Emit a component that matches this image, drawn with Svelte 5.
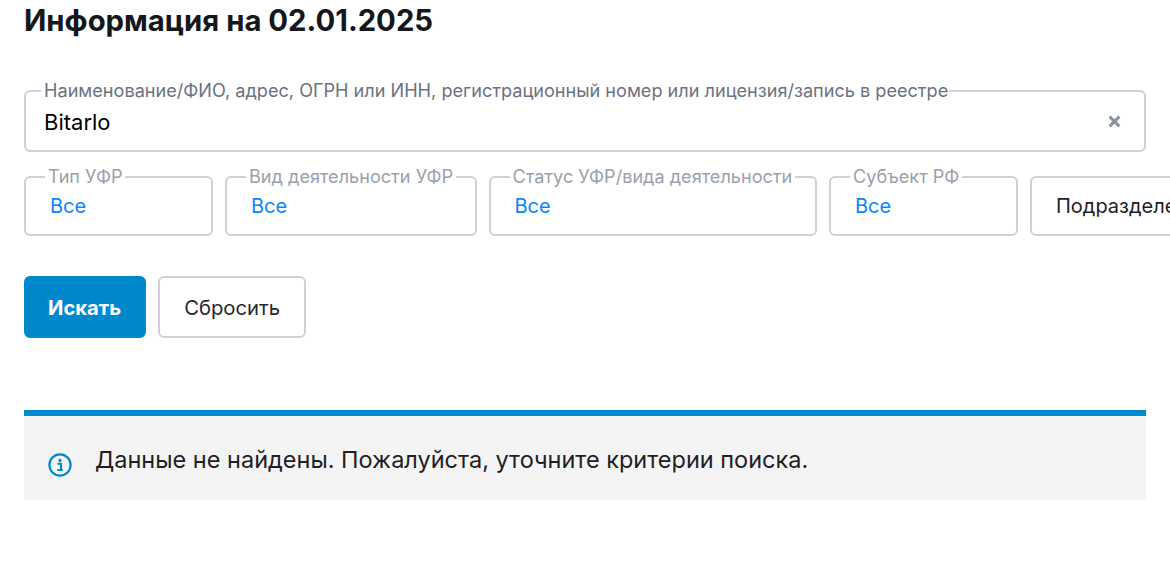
<script lang="ts">
  interface Filter {
    label: string;
    width: number;
  }

  const filters: Filter[] = [
    { label: "Тип УФР", width: 189 },
    { label: "Вид деятельности УФР", width: 251.5 },
    { label: "Статус УФР/вида деятельности", width: 328.5 },
    { label: "Субъект РФ", width: 189 },
  ];
</script>

<div class="page">
  <h1 class="title">Информация на 02.01.2025</h1>

  <fieldset class="search">
    <legend>Наименование/ФИО, адрес, ОГРН или ИНН, регистрационный номер или лицензия/запись в реестре</legend>
    <span class="query">Bitarlo</span>
    <svg class="clear" viewBox="0 0 12 12" width="13" height="13" aria-hidden="true">
      <path d="M1.5 1.5l9 9M10.5 1.5l-9 9" stroke="#8b93a1" stroke-width="2.8" fill="none" />
    </svg>
  </fieldset>

  <div class="filters">
    {#each filters as filter}
      <fieldset class="filter" style="width: {filter.width}px">
        <legend>{filter.label}</legend>
        <span class="value">Все</span>
      </fieldset>
    {/each}
    <div class="filter plain">Подразделение</div>
  </div>

  <div class="actions">
    <button class="btn primary">Искать</button>
    <button class="btn">Сбросить</button>
  </div>

  <div class="notice">
    <svg class="info" viewBox="0 0 24 24" width="24" height="24" aria-hidden="true">
      <circle cx="12" cy="12" r="10.6" fill="none" stroke="#0088cc" stroke-width="2.2" />
      <circle cx="12" cy="7.4" r="1.6" fill="#0088cc" />
      <path d="M9.4 10.7h3.6v6h1.8M9.4 16.9h5.4" fill="none" stroke="#0088cc" stroke-width="2" />
    </svg>
    <span>Данные не найдены. Пожалуйста, уточните критерии поиска.</span>
  </div>
</div>

<style>
  :global(body) {
    background: #fff;
    overflow: hidden;
  }

  .page {
    box-sizing: border-box;
    width: 1170px;
    height: 563px;
    padding: 0 24px;
    overflow: hidden;
    font-family: Inter, "Noto Sans", sans-serif;
    color: #1f2024;
  }

  .title {
    margin: 0;
    padding-top: 3px;
    font-size: 29.3px;
    line-height: 36px;
    font-weight: 700;
    color: #15171a;
  }

  fieldset {
    box-sizing: border-box;
    margin: 0;
    min-width: 0;
    border: 2px solid #cfd1d7;
    border-radius: 6px;
  }

  legend {
    white-space: nowrap;
  }

  .search {
    position: relative;
    display: flex;
    align-items: center;
    height: 72px;
    margin-top: 41px;
    padding: 0 18px;
  }

  .search legend {
    margin-left: -3px;
    padding: 0 1px 2px 3px;
    font-size: 18.12px;
    line-height: 20px;
    color: #6b7280;
  }

  .query {
    font-size: 22px;
    color: #000;
    margin-top: -8px;
  }

  .clear {
    position: absolute;
    right: 23px;
    top: 13px;
  }

  .filters {
    display: flex;
    gap: 12px;
    margin-top: 14px;
    width: 1300px;
  }

  .filter {
    flex: none;
    height: 70px;
    padding: 0 24px;
  }

  .filter legend {
    margin-left: -5px;
    padding: 0 3px 2px;
    font-size: 18.12px;
    line-height: 20px;
    color: #9aa0ac;
  }

  .value {
    display: block;
    font-size: 20px;
    line-height: 24px;
    margin-top: 6px;
    color: #0a84ff;
  }

  .plain {
    box-sizing: border-box;
    width: 220px;
    height: 60px;
    margin-top: 10px;
    border: 2px solid #cfd1d7;
    border-radius: 6px;
    font-size: 20px;
    line-height: 56px;
    white-space: nowrap;
  }

  .actions {
    display: flex;
    gap: 12px;
    margin-top: 40px;
  }

  .btn {
    box-sizing: border-box;
    height: 62px;
    padding: 0 24px;
    border: 2px solid #cfd1d7;
    border-radius: 6px;
    background: #fff;
    font: 400 20.3px Inter, "Noto Sans", sans-serif;
    color: #26282c;
  }

  .primary {
    padding: 0 23px 0 22px;
    border-color: #0088cc;
    background: #0088cc;
    color: #fff;
    font-weight: 700;
    font-size: 20.2px;
  }

  .notice {
    display: flex;
    align-items: center;
    gap: 23px;
    height: 90px;
    box-sizing: border-box;
    margin-top: 72px;
    padding: 0 24px;
    border-top: 6px solid #0088cc;
    background: #f4f4f4;
    font-size: 23.5px;
  }

  .info {
    margin-top: 14px;
  }

  .notice span {
    margin-top: 2px;
  }
</style>
